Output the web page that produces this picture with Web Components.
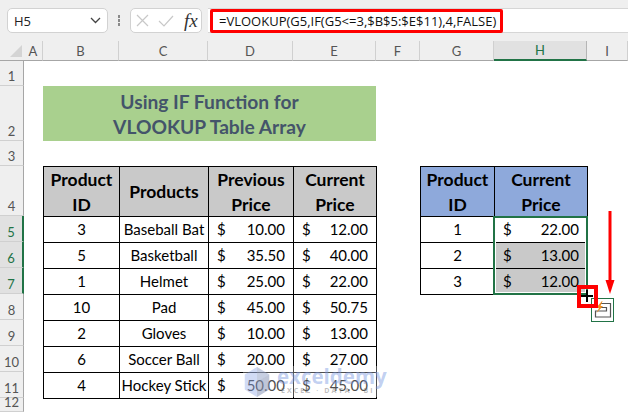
<!DOCTYPE html>
<html>
<head>
<meta charset="utf-8">
<style>
  html,body{margin:0;padding:0;background:#fff;}
  body{width:628px;height:412px;overflow:hidden;}
</style>
</head>
<body>
<xl-app>
  <xl-formula-bar cell="H5" formula="=VLOOKUP(G5,IF(G5<=3,$B$5:$E$11),4,FALSE)"></xl-formula-bar>
  <xl-sheet>
    <xl-cell kind="title" area="3 / 3 / 4 / 7">Using IF Function for<br>VLOOKUP Table Array</xl-cell>
    <xl-table col="3" row="5" head="#c9c9c9" data='[["Product<br>ID","Products","Previous<br>Price","Current<br>Price"],["3","Baseball Bat","$10.00","$12.00"],["5","Basketball","$35.50","$40.00"],["1","Helmet","$25.00","$22.00"],["10","Pad","$45.00","$50.75"],["2","Gloves","$10.00","$13.00"],["6","Soccer Ball","$20.00","$27.00"],["4","Hockey Stick","$50.00","$45.00"]]'></xl-table>
    <xl-table col="8" row="5" head="#8ea9db" data='[["Product<br>ID","Current<br>Price"],["1","$22.00"],["2","~$13.00"],["3","~$12.00"]]'></xl-table>
    <xl-fill-overlay></xl-fill-overlay>
    <xl-watermark></xl-watermark>
  </xl-sheet>
</xl-app>

<script>
const COL_WIDTHS = [24,19,76,89,85,83,44,74,93,41]
const ROW_HEIGHTS = [20,25,55,25,50,26,26,26,26,26,26,26,14]
const COLS = ["A","B","C","D","E","F","G","H","I"]

class XlApp extends HTMLElement {
  constructor(){
    super()
    this.attachShadow({mode:'open'})
    this.shadowRoot.innerHTML = `
      <style>:host{display:flex;flex-direction:column;width:628px;height:412px;overflow:hidden;}</style>
      <slot></slot>`
  }
}

class XlFormulaBar extends HTMLElement {
  constructor(){
    super()
    this.attachShadow({mode:'open'})
    this.shadowRoot.innerHTML = `
      <style>
        :host{display:flex;height:41px;flex:none;background:#efefef;padding-top:8px;box-sizing:border-box;
          font-family:"Open Sans","Noto Sans",sans-serif;color:#222;}
        #row{flex:1;display:flex;align-items:stretch;height:26px;}
        #name{width:101px;margin-left:7px;height:25px;box-sizing:border-box;background:#fff;border:1px solid #d2d2d2;border-radius:5px;
          display:flex;align-items:center;justify-content:space-between;padding:0 6px 0 6px;font-size:13px;}
        #dots{width:22px;display:flex;flex-direction:column;align-items:center;justify-content:center;gap:1px;height:25px;}
        #dots i{width:2px;height:3px;background:#8a8a8a;display:block;}
        #fx{width:72px;height:25px;box-sizing:border-box;background:#fff;border:1px solid #d2d2d2;border-radius:5px;
          display:flex;align-items:center;padding-left:5px;}
        #fx span{font-family:"Liberation Serif",serif;font-style:italic;font-size:19px;line-height:20px;color:#333;margin-left:10px;}
        #fx svg+svg{margin-left:9px;}
        #input{flex:1;margin-left:6px;height:25px;background:#fff;border-top:1px solid #d6d6d6;border-bottom:1px solid #d6d6d6;box-sizing:border-box;position:relative;}
        #red{position:absolute;left:2px;top:0;width:293px;height:24px;box-sizing:border-box;border:3px solid #f00;border-radius:2px;
          display:flex;align-items:center;padding-left:6px;font-size:13px;color:#111;white-space:pre;}
      </style>
      <div id="row">
        <div id="name"><span></span>
          <svg width="11" height="7" viewBox="0 0 11 7"><path d="M1 1l4.500 4.500L10 1" fill="none" stroke="#444" stroke-width="1.3"/></svg>
        </div>
        <div id="dots"><i></i><i></i><i></i></div>
        <div id="fx">
          <svg width="13" height="13" viewBox="0 0 13 13"><path d="M1 1l11 11M12 1L1 12" fill="none" stroke="#c8c8c8" stroke-width="1.2"/></svg>
          <svg width="16" height="12" viewBox="0 0 16 12"><path d="M1 6l5 5L15 1" fill="none" stroke="#c8c8c8" stroke-width="1.2"/></svg>
          <span>fx</span>
        </div>
        <div id="input"><div id="red"></div></div>
      </div>`
  }
  connectedCallback(){
    this.shadowRoot.querySelector("#name span").textContent = this.getAttribute("cell")
    this.shadowRoot.getElementById("red").textContent = this.getAttribute("formula")
  }
}

class XlSheet extends HTMLElement {
  constructor(){
    super()
    this.attachShadow({mode:'open'})
    let heads = ""
    COLS.forEach((c,i)=>{
      heads += `<div class="colh ${c=="H"?"on":""}" style="grid-area:1 / ${i+2}">${c}</div>`
    })
    ROW_HEIGHTS.slice(1).forEach((h,i)=>{
      let n = i+1
      heads += `<div class="rowh ${n>=5&&n<=7?"on":""}" style="grid-area:${i+2} / 1">${n}</div>`
    })
    this.shadowRoot.innerHTML = `
      <style>
        :host{display:block;flex:1;background:#fff;position:relative;overflow:hidden;}
        #grid{display:grid;grid-template-columns:${COL_WIDTHS.map(w=>w+"px").join(" ")};
          grid-template-rows:${ROW_HEIGHTS.map(h=>h+"px").join(" ")};width:100%;height:100%;}
        .corner{grid-area:1 / 1;background:#efefef;border-bottom:1px solid #a6a6a6;box-sizing:border-box;position:relative;}
        .corner:after{content:"";position:absolute;right:2px;bottom:3px;border-style:solid;border-width:0 0 12px 12px;border-color:transparent transparent #d4d4d4 transparent;}
        .colh,.rowh{font-family:"Lato","Open Sans",sans-serif;font-size:13px;color:#555;background:#efefef;box-sizing:border-box;display:flex;}
        .colh{align-items:center;justify-content:center;border-right:1px solid #d0d0d0;border-bottom:1px solid #a6a6a6;}
        .rowh{align-items:flex-end;justify-content:center;border-bottom:1px solid #d0d0d0;border-right:1px solid #a6a6a6;padding-bottom:1px;font-size:13px;}
        .colh.on{background:#e1e1e1;color:#217346;border-bottom:2px solid #217346;border-right:1px solid #b5b5b5;}
        .rowh.on{background:#e1e1e1;color:#217346;border-right:2px solid #217346;}
      </style>
      <div id="grid">
        <div class="corner"></div>
        ${heads}
        <slot></slot>
      </div>`
  }
}

class XlCell extends HTMLElement {
  constructor(){
    super()
    this.attachShadow({mode:'open'})
    this.shadowRoot.innerHTML = `
      <style>
        :host{display:flex;align-items:center;justify-content:center;text-align:center;box-sizing:border-box;
          font-family:"Lato","Open Sans",sans-serif;font-size:15px;color:#000;line-height:25px;white-space:nowrap;}
        :host([kind=title]){background:#a9d08e;color:#44546a;font-weight:bold;font-size:19.2px;}
        :host([kind=head]),:host([kind=body]),:host([kind=money]){border:1px solid #000;margin:0 -1px -1px 0;}
        :host([kind=head]){font-weight:bold;font-size:17.5px;}
        :host([kind=money]){justify-content:space-between;padding:0 8px;}
        :host([shade]){background:#c9c9c9;}
      </style>
      <slot></slot>`
  }
  connectedCallback(){
    let area = this.getAttribute("area")
    if(area) this.style.gridArea = area
    let bg = this.getAttribute("bg")
    if(bg) this.style.background = bg
  }
}

class XlTable extends HTMLElement {
  // display:contents so the cells land on the sheet's own grid
  constructor(){
    super()
    this.attachShadow({mode:'open'})
    this.shadowRoot.innerHTML = `<style>:host{display:contents;}</style><slot></slot>`
  }
  connectedCallback(){
    let col = +this.getAttribute("col")
    let row = +this.getAttribute("row")
    let head = this.getAttribute("head")
    JSON.parse(this.getAttribute("data")).forEach((cells,r)=>{
      cells.forEach((text,c)=>{
        let cell = document.createElement("xl-cell")
        cell.setAttribute("area",`${row+r} / ${col+c}`)
        if(r==0){
          cell.setAttribute("kind","head")
          cell.setAttribute("bg",head)
          cell.innerHTML = text
        } else if(text.includes("$")){
          cell.setAttribute("kind","money")
          if(text[0]=="~") cell.setAttribute("shade","")
          let s1 = document.createElement("span")
          s1.textContent = "$"
          let s2 = document.createElement("span")
          s2.textContent = text.replace("~","").slice(1)
          cell.append(s1,s2)
        } else {
          cell.setAttribute("kind","body")
          cell.textContent = text
        }
        this.appendChild(cell)
      })
    })
  }
}

class XlFillOverlay extends HTMLElement {
  constructor(){
    super()
    this.attachShadow({mode:'open'})
    this.shadowRoot.innerHTML = `
      <style>
        :host{display:block;position:absolute;left:0;top:0;width:0;height:0;}
        div,svg{position:absolute;box-sizing:border-box;}
        #sel{left:493px;top:175px;width:95px;height:79px;border:2px solid #217346;box-shadow:inset 0 0 0 1px #fff;}
        #paste{left:591px;top:257px;width:23px;height:24px;border:1px solid #217346;background:#fff;}
        #hbox{left:577px;top:244px;width:21px;height:23px;border:4px solid #f00;}
      </style>
      <div id="sel"></div>
      <div id="paste">
        <svg style="left:0;top:0" width="21" height="22" viewBox="0 0 21 22">
          <path d="M9 4.500h9.500v13.500H3.500v-6h11V8.500H9" fill="none" stroke="#555" stroke-width="1.200"/>
          <path d="M10 2L4 9h3L4.500 14l6.500-7H8.500l2-5z" fill="#ee8f22"/>
        </svg>
      </div>
      <div id="hbox"></div>
      <svg style="left:580px;top:248px" width="14" height="14" viewBox="0 0 14 14">
        <path d="M7 1v12M1 7h12" stroke="#000" stroke-width="2" fill="none"/>
      </svg>
      <svg style="left:604px;top:170px" width="12" height="84" viewBox="0 0 12 84">
        <path d="M6 0v72" stroke="#f00" stroke-width="3" fill="none"/>
        <path d="M1.500 69h9L6 83z" fill="#f00"/>
      </svg>`
  }
}

class XlWatermark extends HTMLElement {
  constructor(){
    super()
    this.attachShadow({mode:'open'})
    this.shadowRoot.innerHTML = `
      <style>
        :host{display:flex;position:absolute;left:243px;top:325px;height:31px;width:142px;align-items:flex-start;gap:6px;pointer-events:none;
          font-family:"Open Sans",sans-serif;background:rgba(255,255,255,.3);}
        #t{display:flex;flex-direction:column;align-items:flex-end;}
        #a{font-size:20.500px;font-weight:bold;line-height:20px;color:rgba(120,150,225,.45);}
        #b{font-size:7px;line-height:7px;color:rgba(110,110,110,.45);letter-spacing:2.1px;font-weight:bold;margin:1px 12px 0 0;}
      </style>
      <svg width="28" height="32" viewBox="0 0 28 34" style="flex:none">
        <path d="M14 1L27 9v16L14 33 1 25V9z" fill="rgba(120,150,225,.34)"/>
        <path d="M14 1L27 9 14 17z" fill="rgba(170,170,170,.25)"/>
        <path d="M14 17L27 9v16L14 33z" fill="rgba(150,150,150,.3)"/>
      </svg>
      <div id="t"><div id="a">exceldemy</div><div id="b">EXCEL · DATA · BI</div></div>`
  }
}

customElements.define("xl-app", XlApp)
customElements.define("xl-formula-bar", XlFormulaBar)
customElements.define("xl-sheet", XlSheet)
customElements.define("xl-cell", XlCell)
customElements.define("xl-table", XlTable)
customElements.define("xl-fill-overlay", XlFillOverlay)
customElements.define("xl-watermark", XlWatermark)
</script>
</body>
</html>
